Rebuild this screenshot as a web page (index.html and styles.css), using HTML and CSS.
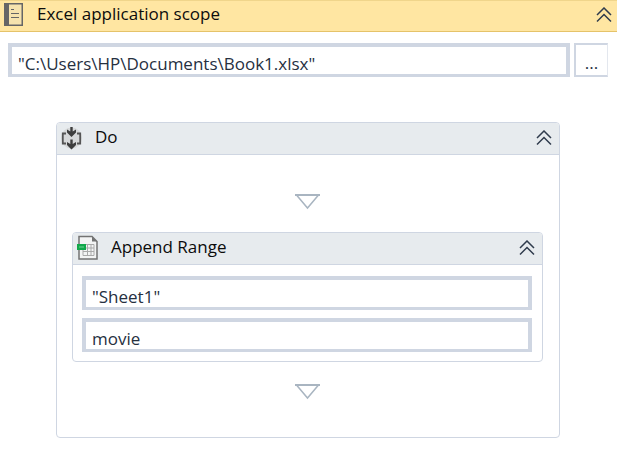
FILE: index.html
```html
<!DOCTYPE html>
<html lang="en">
<head>
<meta charset="utf-8">
<title>Excel application scope</title>
<link rel="stylesheet" href="styles.css">
</head>
<body>
<main class="scope">
  <header class="bar bar-scope">
    <svg class="icon" viewBox="0 0 24 26" aria-hidden="true">
      <path d="M3 1h19v23H3z" fill="#666"/>
      <path d="M8 2.500h12.500v20H8z" fill="#f6e3ae"/>
      <path d="M10 7.500h3M10 11.500h8M10 15.500h8" stroke="#666" stroke-width="1.200"/>
    </svg>
    <h1 class="title">Excel application scope</h1>
    <button class="collapse" type="button" aria-label="Collapse scope">
      <svg viewBox="0 0 16 16" aria-hidden="true"><path d="M1 8 8 1l7 7M1 14.500l7-7 7 7"/></svg>
    </button>
  </header>
  <div class="file-row">
    <input class="field" type="text" aria-label="Workbook path" value="&quot;C:\Users\HP\Documents\Book1.xlsx&quot;">
    <button class="browse" type="button" aria-label="Browse">...</button>
  </div>
  <section class="panel panel-do">
    <header class="bar">
      <svg class="icon" viewBox="0 0 24 26" aria-hidden="true">
        <circle cx="11.500" cy="13" r="10.500" fill="#d6d8d9"/>
        <path d="M6 8.500H2.800v10H6M17 8.500h3.200v10H17" fill="none" stroke="#555" stroke-width="1.800"/>
        <path d="M10.300 2h2.400v4.500L16 4.500v3L11.500 12 7 7.500v-3l3.300 2zM10.300 14.500h2.400v4.500L16 17v3l-4.500 4.500L7 20v-3l3.300 2z" fill="#3e3e3e"/>
      </svg>
      <h2 class="title">Do</h2>
      <button class="collapse" type="button" aria-label="Collapse Do">
        <svg viewBox="0 0 16 16" aria-hidden="true"><path d="M1 8 8 1l7 7M1 14.500l7-7 7 7"/></svg>
      </button>
    </header>
    <div class="sequence">
      <svg class="drop" viewBox="0 0 26 18" aria-hidden="true"><path d="M1.500 2 12.500 15 23.500 2" fill="none" stroke="#a9b5c1" stroke-width="1.500"/><path d="M0 1h25v2H0z" fill="#a9b5c1"/></svg>
      <section class="panel">
        <header class="bar">
          <svg class="icon" viewBox="0 0 24 26" aria-hidden="true">
            <path d="M3 1.500h13l5 5V24H3z" fill="#f3f4f4" stroke="#737373" stroke-width="1.500"/>
            <path d="M16 1.500v5h5z" fill="#737373"/>
            <path d="M7 9.500h11v11H7zM7 13h11M7 16.500h11M11.500 9.500v11M15 9.500v11" fill="none" stroke="#aaa"/>
            <path d="M1 9h9v6H1z" fill="#12a84b"/>
            <path d="M3 12h5" stroke="#72d297"/>
          </svg>
          <h3 class="title">Append Range</h3>
          <button class="collapse" type="button" aria-label="Collapse Append Range">
            <svg viewBox="0 0 16 16" aria-hidden="true"><path d="M1 8 8 1l7 7M1 14.500l7-7 7 7"/></svg>
          </button>
        </header>
        <div class="fields">
          <input class="field" type="text" aria-label="Sheet name" value="&quot;Sheet1&quot;">
          <input class="field" type="text" aria-label="Data table" value="movie">
        </div>
      </section>
      <svg class="drop" viewBox="0 0 26 18" aria-hidden="true"><path d="M1.500 2 12.500 15 23.500 2" fill="none" stroke="#a9b5c1" stroke-width="1.500"/><path d="M0 1h25v2H0z" fill="#a9b5c1"/></svg>
    </div>
  </section>
</main>
</body>
</html>
```
FILE: styles.css
```css
* { box-sizing: border-box; }

body {
  margin: 0;
  background: #fff;
  color: #0c0c0c;
  font-family: "Segoe UI", "Open Sans", "Noto Sans", sans-serif;
  font-size: 17px;
}

.bar {
  display: flex;
  align-items: center;
  height: 32px;
  padding: 0 7px 2px 3px;
  border-bottom: 1px solid #cfd6e2;
  background: #e7ebee;
}

.bar-scope {
  padding: 0 5px 2px 1px;
  border-top: 1px solid #f0d58b;
  border-bottom-color: #e5c36a;
  background: #ffe6a2;
}

.icon {
  flex: none;
  width: 24px;
  height: 26px;
}

.title {
  flex: 1;
  margin: 0 0 0 12px;
  padding-bottom: 2px;
  font-size: 17px;
  font-weight: 400;
  line-height: 24px;
}

.panel .title {
  margin-left: 11px;
}

.collapse {
  width: 16px;
  height: 16px;
  padding: 0;
  border: 0;
  background: none;
}

.collapse svg {
  display: block;
  fill: none;
  stroke: #303c4d;
  stroke-width: 1.5;
}

.file-row {
  display: flex;
  gap: 4px;
  padding: 11px 9px 0 8px;
}

.field {
  display: block;
  flex: 1;
  width: 100%;
  min-width: 0;
  height: 34px;
  padding: 5px 6px 0;
  border: 4px solid #cfd6e2;
  border-bottom-width: 3px;
  border-radius: 0;
  background: #fff;
  color: #26303f;
  font: inherit;
}

.browse {
  width: 34px;
  height: 34px;
  padding: 4px 0 0;
  border: 2px solid #cfd6e2;
  border-right: 1px solid #e3e7ee;
  background: #fff;
  color: #26303f;
  font: inherit;
}

.panel {
  border: 1px solid #cfd6e2;
  border-radius: 4px;
  overflow: hidden;
}

.panel-do {
  margin: 45px 57px 37px 56px;
}

.sequence {
  display: flex;
  flex-direction: column;
  gap: 21px;
  padding: 38px 16px 36px 15px;
}

.drop {
  align-self: center;
  width: 26px;
  height: 18px;
}

.fields {
  display: grid;
  gap: 8px;
  padding: 11px 10px 9px 9px;
}
```
